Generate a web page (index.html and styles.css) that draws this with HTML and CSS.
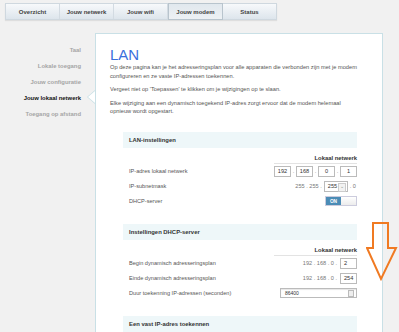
FILE: index.html
```html
<!DOCTYPE html>
<html lang="nl">
<head>
  <meta charset="UTF-8">
  <meta name="viewport" content="width=device-width, initial-scale=1.0">
  <title>LAN</title>
  <link rel="stylesheet" href="styles.css">
</head>
<body>

  <!-- Top navigation -->
  <div class="topnav">
    <div class="tab">Overzicht</div>
    <div class="tab">Jouw netwerk</div>
    <div class="tab">Jouw wifi</div>
    <div class="tab active">Jouw modem</div>
    <div class="tab">Status</div>
  </div>

  <div class="main">
    <!-- Side menu -->
    <div class="sidebar">
      <div class="side-item">Taal</div>
      <div class="side-item">Lokale toegang</div>
      <div class="side-item">Jouw configuratie</div>
      <div class="side-item current">Jouw lokaal netwerk</div>
      <div class="side-item">Toegang op afstand</div>
    </div>

    <!-- Content panel -->
    <div class="panel">
      <h1>LAN</h1>
      <p>Op deze pagina kan je het adresseringsplan voor alle apparaten die verbonden zijn met je modem configureren en ze vaste IP-adressen toekennen.</p>
      <p>Vergeet niet op 'Toepassen' te klikken om je wijzigingen op te slaan.</p>
      <p>Elke wijziging aan een dynamisch toegekend IP-adres zorgt ervoor dat de modem helemaal opnieuw wordt opgestart.</p>

      <div class="section">
        <div class="section-head">LAN-instellingen</div>
        <div class="col-head"><span>Lokaal netwerk</span></div>
        <div class="row">
          <span class="label">IP-adres lokaal netwerk</span>
          <span class="value">
            <span class="box">192</span><span class="dot">.</span>
            <span class="box">168</span><span class="dot">.</span>
            <span class="box">0</span><span class="dot">.</span>
            <span class="box">1</span>
          </span>
        </div>
        <div class="row">
          <span class="label">IP-subnetmask</span>
          <span class="value">
            <span class="plain">255 . 255 .</span>
            <span class="select">255<span class="caret">&#8964;</span></span>
            <span class="plain">. 0</span>
          </span>
        </div>
        <div class="row">
          <span class="label">DHCP-server</span>
          <span class="value">
            <span class="toggle"><span class="on">ON</span><span class="off"></span></span>
          </span>
        </div>
      </div>

      <div class="section">
        <div class="section-head">Instellingen DHCP-server</div>
        <div class="col-head"><span>Lokaal netwerk</span></div>
        <div class="row">
          <span class="label">Begin dynamisch adresseringsplan</span>
          <span class="value"><span class="plain">192 . 168 . 0 .</span><span class="box left">2</span></span>
        </div>
        <div class="row">
          <span class="label">Einde dynamisch adresseringsplan</span>
          <span class="value"><span class="plain">192 . 168 . 0 .</span><span class="box left">254</span></span>
        </div>
        <div class="row">
          <span class="label">Duur toekenning IP-adressen (seconden)</span>
          <span class="value"><span class="wide">86400<span class="spin"></span></span></span>
        </div>
      </div>

      <div class="section">
        <div class="section-head">Een vast IP-adres toekennen</div>
      </div>
    </div>
  </div>

  <!-- Orange annotation arrow -->
  <svg class="arrow" width="34" height="62" viewBox="0 0 34 62">
    <path d="M7 1 H22 V26 H30 L15 57 L1 26 H7 Z" fill="none" stroke="#f07a22" stroke-width="2" stroke-linejoin="miter"/>
  </svg>

</body>
</html>
```

FILE: styles.css
```css
body {
  margin: 0;
  background: #f1f1f1;
  font-family: "Liberation Sans", Arial, sans-serif;
  color: #555;
  height: 332px;
  overflow: hidden;
}

/* Top tabs */
.topnav {
  display: flex;
  margin: 3px 0 0 5px;
  width: 272px;
  height: 17px;
  border: 1px solid #cfd8df;
  box-sizing: border-box;
  box-shadow: 0 1px 1px rgba(0, 0, 0, 0.08);
}
.tab {
  flex: 1;
  display: flex;
  align-items: center;
  justify-content: center;
  font-size: 6px;
  font-weight: bold;
  color: #444;
  background: linear-gradient(#f7f9fb, #dde5ec);
  border-right: 1px solid #d3dbe2;
}
.tab:last-child {
  border-right: none;
}
.tab.active {
  background: linear-gradient(#e1e8ee, #edf1f4);
  border: 1px solid #b8c4cd;
  margin: -1px 0;
}

/* Layout */
.main {
  display: flex;
  margin-top: 13px;
}
.sidebar {
  width: 95px;
  padding: 13px 14px 0 0;
  box-sizing: border-box;
  text-align: right;
}
.side-item {
  height: 16px;
  line-height: 8px;
  font-size: 5.9px;
  font-weight: bold;
  color: #a5a5a5;
}
.side-item.current {
  color: #111;
}

.panel {
  position: relative;
  width: 288px;
  height: 299px;
  overflow: hidden;
  box-sizing: border-box;
  background: #fff;
  border: 1px solid #c9e0e6;
  border-bottom: none;
  padding: 13px 0 0 14px;
}
.pointer-host {
  position: relative;
}
.main {
  position: relative;
}
.main::before,
.main::after {
  content: "";
  position: absolute;
  top: 57px;
  border-style: solid;
  border-color: transparent;
  z-index: 1;
}
.main::before {
  left: 87px;
  border-width: 7px 8px 7px 0;
  border-right-color: #c9e0e6;
}
.main::after {
  left: 88px;
  top: 58px;
  border-width: 6px 7px 6px 0;
  border-right-color: #fff;
}

h1 {
  margin: 0;
  font-size: 15px;
  line-height: 16px;
  font-weight: normal;
  color: #3a6fdc;
}
p {
  margin: 0 0 5px;
  width: 250px;
  font-size: 5.7px;
  line-height: 8.5px;
  color: #555;
}

/* Settings sections */
.section {
  width: 234px;
  margin: 16px 0 0 13px;
}
.section + .section {
  margin-top: 15px;
}
.section-head {
  height: 16px;
  line-height: 16px;
  padding-left: 6px;
  background: #eef7f9;
  font-size: 5.9px;
  font-weight: bold;
  color: #333;
}
.col-head {
  display: flex;
  justify-content: flex-end;
}
.col-head span {
  width: 83px;
  padding-top: 6px;
  height: 9px;
  line-height: 8px;
  text-align: right;
  border-bottom: 1px solid #e3e3e3;
  font-size: 5.9px;
  font-weight: bold;
  color: #333;
}
.row {
  display: flex;
  align-items: center;
  justify-content: space-between;
  height: 15px;
  padding-left: 6px;
  font-size: 5.6px;
}
.value {
  display: flex;
  align-items: center;
  color: #777;
}
.box {
  width: 17px;
  height: 11px;
  box-sizing: border-box;
  border: 1px solid #bbb;
  display: flex;
  align-items: center;
  justify-content: center;
  color: #333;
}
.box.left {
  justify-content: flex-start;
  padding-left: 3px;
  margin-left: 2px;
}
.dot {
  width: 5px;
  text-align: center;
}
.plain {
  margin: 0 1px;
}
.select {
  position: relative;
  width: 24px;
  height: 11px;
  box-sizing: border-box;
  border: 1px solid #bbb;
  display: flex;
  align-items: center;
  padding-left: 3px;
  color: #333;
  margin: 0 1px;
}
.caret {
  position: absolute;
  right: 1px;
  top: 1px;
  width: 6px;
  height: 7px;
  border: 1px solid #ccc;
  background: #f2f2f2;
  font-size: 5px;
  line-height: 5px;
  text-align: center;
  color: #888;
}
.toggle {
  display: flex;
  width: 32px;
  height: 10px;
  border: 1px solid #ccd;
  box-sizing: border-box;
}
.toggle .on {
  flex: 1;
  background: #4b8cb6;
  color: #fff;
  font-size: 4.8px;
  font-weight: bold;
  display: flex;
  align-items: center;
  justify-content: center;
}
.toggle .off {
  flex: 1;
  background: linear-gradient(#fff, #ececec);
}
.wide {
  position: relative;
  width: 77px;
  height: 10px;
  box-sizing: border-box;
  border: 1px solid #bbb;
  box-shadow: inset 0 1px 1px rgba(0, 0, 0, 0.1);
  padding-left: 4px;
  line-height: 8px;
  font-size: 5px;
  color: #333;
}
.spin {
  position: absolute;
  right: 2px;
  top: 1px;
  width: 4px;
  height: 5px;
  border: 1px solid #bbb;
  background: #eee;
}

/* Annotation */
.arrow {
  position: absolute;
  left: 366px;
  top: 222px;
}
```
